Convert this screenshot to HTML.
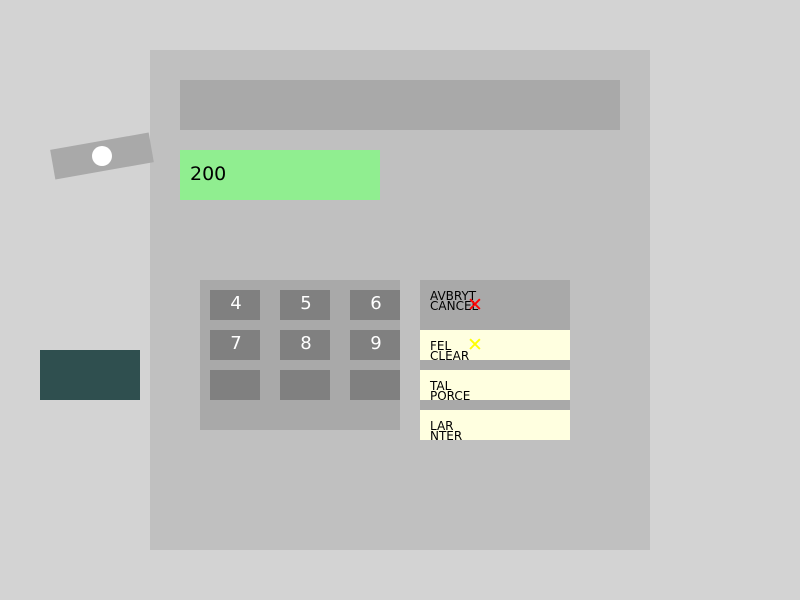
<!DOCTYPE html>
<html><head><style>
*{margin:0;padding:0;box-sizing:border-box}
body{width:800px;height:600px;background:#d3d3d3;position:relative;overflow:hidden;font-family:"DejaVu Sans","Liberation Sans",sans-serif}
div{position:absolute}
.k{width:50px;height:30px;background:#808080;color:#fff;font-size:18px;text-align:center;line-height:28px;padding-left:2px}
.s{left:420px;width:150px;height:30px;background:#ffffe0;font-size:12px;line-height:10px;padding:11px 0 0 10px;color:#000;overflow:hidden}
.x{font-size:19px;line-height:20px}
</style></head><body>
<div style="left:150px;top:50px;width:500px;height:500px;background:#c0c0c0"></div>
<div style="left:180px;top:80px;width:440px;height:50px;background:#a9a9a9"></div>
<div style="left:180px;top:150px;width:200px;height:50px;background:#90ee90;font-size:19px;line-height:48px;padding-left:10px;color:#000">200</div>
<div style="left:52px;top:141px;width:100px;height:30px;background:#a9a9a9;transform:rotate(-10deg)"></div>
<div style="left:92px;top:146px;width:20px;height:20px;border-radius:50%;background:#fff"></div>
<div style="left:40px;top:350px;width:100px;height:50px;background:#2f4f4f"></div>
<div style="left:200px;top:280px;width:200px;height:150px;background:#a9a9a9"></div>
<div class="k" style="left:210px;top:290px">4</div>
<div class="k" style="left:280px;top:290px">5</div>
<div class="k" style="left:350px;top:290px">6</div>
<div class="k" style="left:210px;top:330px">7</div>
<div class="k" style="left:280px;top:330px">8</div>
<div class="k" style="left:350px;top:330px">9</div>
<div class="k" style="left:210px;top:370px"></div>
<div class="k" style="left:280px;top:370px"></div>
<div class="k" style="left:350px;top:370px"></div>
<div style="left:420px;top:280px;width:150px;height:160px;background:#a9a9a9"></div>
<div class="s" style="top:280px;height:50px;background:#a9a9a9;padding-top:11px">AVBRYT<br>CANCEL</div>
<div class="x" style="left:467px;top:295px;color:#ff0000">✕</div>
<div class="s" style="top:330px">FEL<br>CLEAR</div>
<div class="x" style="left:467px;top:335px;color:#ffff00">✕</div>
<div class="s" style="top:370px">TAL<br>PORCE</div>
<div class="s" style="top:410px">LAR<br>NTER</div>
</body></html>
